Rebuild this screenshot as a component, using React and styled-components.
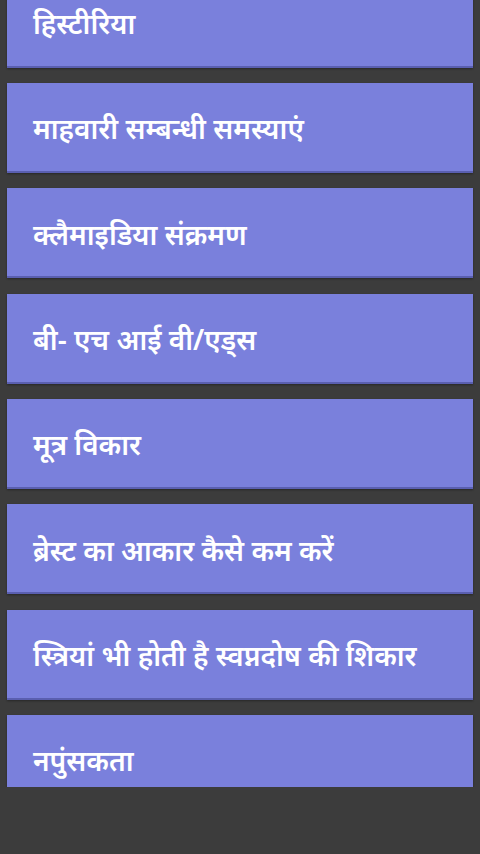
import React from "react";
import styled, { createGlobalStyle } from "styled-components";

const GlobalStyle = createGlobalStyle`
  html, body {
    margin: 0;
    padding: 0;
    background: #3c3c3c;
    font-family: "Noto Sans", "Noto Sans Devanagari", "Lohit Devanagari", sans-serif;
  }
  * { box-sizing: border-box; }
`;

const Screen = styled.div`
  width: 480px;
  height: 854px;
  background: #3c3c3c;
  overflow: hidden;
`;

const Viewport = styled.div`
  height: 787px;
  overflow: hidden;
`;

const List = styled.ul`
  list-style: none;
  margin: -22.3px 0 0 0;
  padding: 0 7px;
  display: flex;
  flex-direction: column;
  gap: 15.33px;
`;

const Card = styled.li`
  height: 90px;
  background: #7a80dc;
  border-bottom: 2px solid #5a5fb0;
  box-shadow: 0 1px 2px rgba(0, 0, 0, 0.35);
  display: flex;
  align-items: center;
  padding: 4px 0 0 26px;
  color: #ffffff;
  font-size: 28px;
  font-weight: 600;
  line-height: 1.2;
  white-space: nowrap;
`;

const items = [
  "हिस्टीरिया",
  "माहवारी सम्बन्धी समस्याएं",
  "क्लैमाइडिया संक्रमण",
  "बी- एच आई वी/एड्स",
  "मूत्र विकार",
  "ब्रेस्ट का आकार कैसे कम करें",
  "स्त्रियां भी होती है स्वप्नदोष की शिकार",
  "नपुंसकता",
];

export default function App() {
  return (
    <>
      <GlobalStyle />
      <Screen>
        <Viewport>
          <List>
            {items.map((t) => (
              <Card key={t}>{t}</Card>
            ))}
          </List>
        </Viewport>
      </Screen>
    </>
  );
}
